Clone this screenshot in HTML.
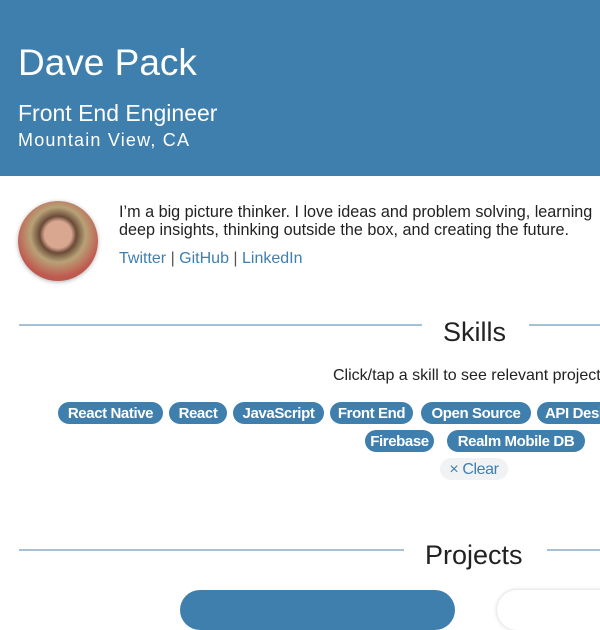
<!DOCTYPE html>
<html><head><style>
body{margin:0;width:600px;height:600px;overflow:hidden;background:#fff;font-family:"Liberation Sans",sans-serif;position:relative}
.hdr{position:absolute;left:0;top:0;width:600px;height:176px;background:#3f7fae;color:#fff}
.a{position:absolute;white-space:nowrap}
.tag{position:absolute;height:22px;line-height:23px;border-radius:11px;background:#3f7fae;color:#fff;font-size:15px;font-weight:bold;text-align:center;letter-spacing:-0.4px}
.line{position:absolute;height:2px;background:#a7c1d4}
a{color:#3f7fae;text-decoration:none}
</style></head><body>
<div class="hdr">
<div class="a" style="left:18px;top:42px;font-size:37px;font-weight:300;">Dave Pack</div>
<div class="a" style="left:18px;top:100px;font-size:23px;">Front End Engineer</div>
<div class="a" style="left:18px;top:130px;font-size:18px;letter-spacing:1.2px">Mountain View, CA</div>
</div>
<div class="a" style="left:18px;top:201px;width:80px;height:80px;border-radius:50%;background:radial-gradient(circle at 50% 42%,#d9a78f 0 22%,#6a4a38 30%,#b8a277 45%,#c0584f 70%,#8a7050 100%);box-shadow:0 1px 4px rgba(0,0,0,.3)"></div>
<div class="a" style="left:119px;top:203px;font-size:16.2px;line-height:18px;color:#222">I’m a big picture thinker. I love ideas and problem solving, learning<br>deep insights, thinking outside the box, and creating the future.</div>
<div class="a" style="left:119px;top:250px;font-size:16px;color:#555"><a>Twitter</a> | <a>GitHub</a> | <a>LinkedIn</a></div>
<div class="line" style="left:19px;top:324px;width:403px"></div>
<div class="line" style="left:529px;top:324px;width:71px"></div>
<div class="a" style="left:443px;top:317px;font-size:27px;color:#222">Skills</div>
<div class="a" style="left:333px;top:367px;font-size:16px;color:#222">Click/tap a skill to see relevant projects</div>
<div class="tag" style="left:58px;top:402px;width:105px">React Native</div>
<div class="tag" style="left:169px;top:402px;width:58px">React</div>
<div class="tag" style="left:233px;top:402px;width:91px">JavaScript</div>
<div class="tag" style="left:330px;top:402px;width:83px">Front End</div>
<div class="tag" style="left:421px;top:402px;width:110px">Open Source</div>
<div class="tag" style="left:537px;top:402px;width:110px;text-align:left;padding-left:8px">API Design</div>
<div class="tag" style="left:365px;top:430px;width:69px">Firebase</div>
<div class="tag" style="left:447px;top:430px;width:138px">Realm Mobile DB</div>
<div class="tag" style="left:440px;top:458px;width:68px;background:#f0f2f4;color:#3f7fae;font-weight:normal;font-size:16px">× Clear</div>
<div class="line" style="left:19px;top:549px;width:385px"></div>
<div class="line" style="left:547px;top:549px;width:53px"></div>
<div class="a" style="left:425px;top:540px;font-size:27px;color:#222">Projects</div>
<div class="a" style="left:180px;top:590px;width:275px;height:40px;border-radius:20px;background:#3f7fae"></div>
<div class="a" style="left:497px;top:590px;width:140px;height:40px;border-radius:20px;background:#fff;box-shadow:0 0 4px rgba(0,0,0,.2)"></div>
</body></html>
